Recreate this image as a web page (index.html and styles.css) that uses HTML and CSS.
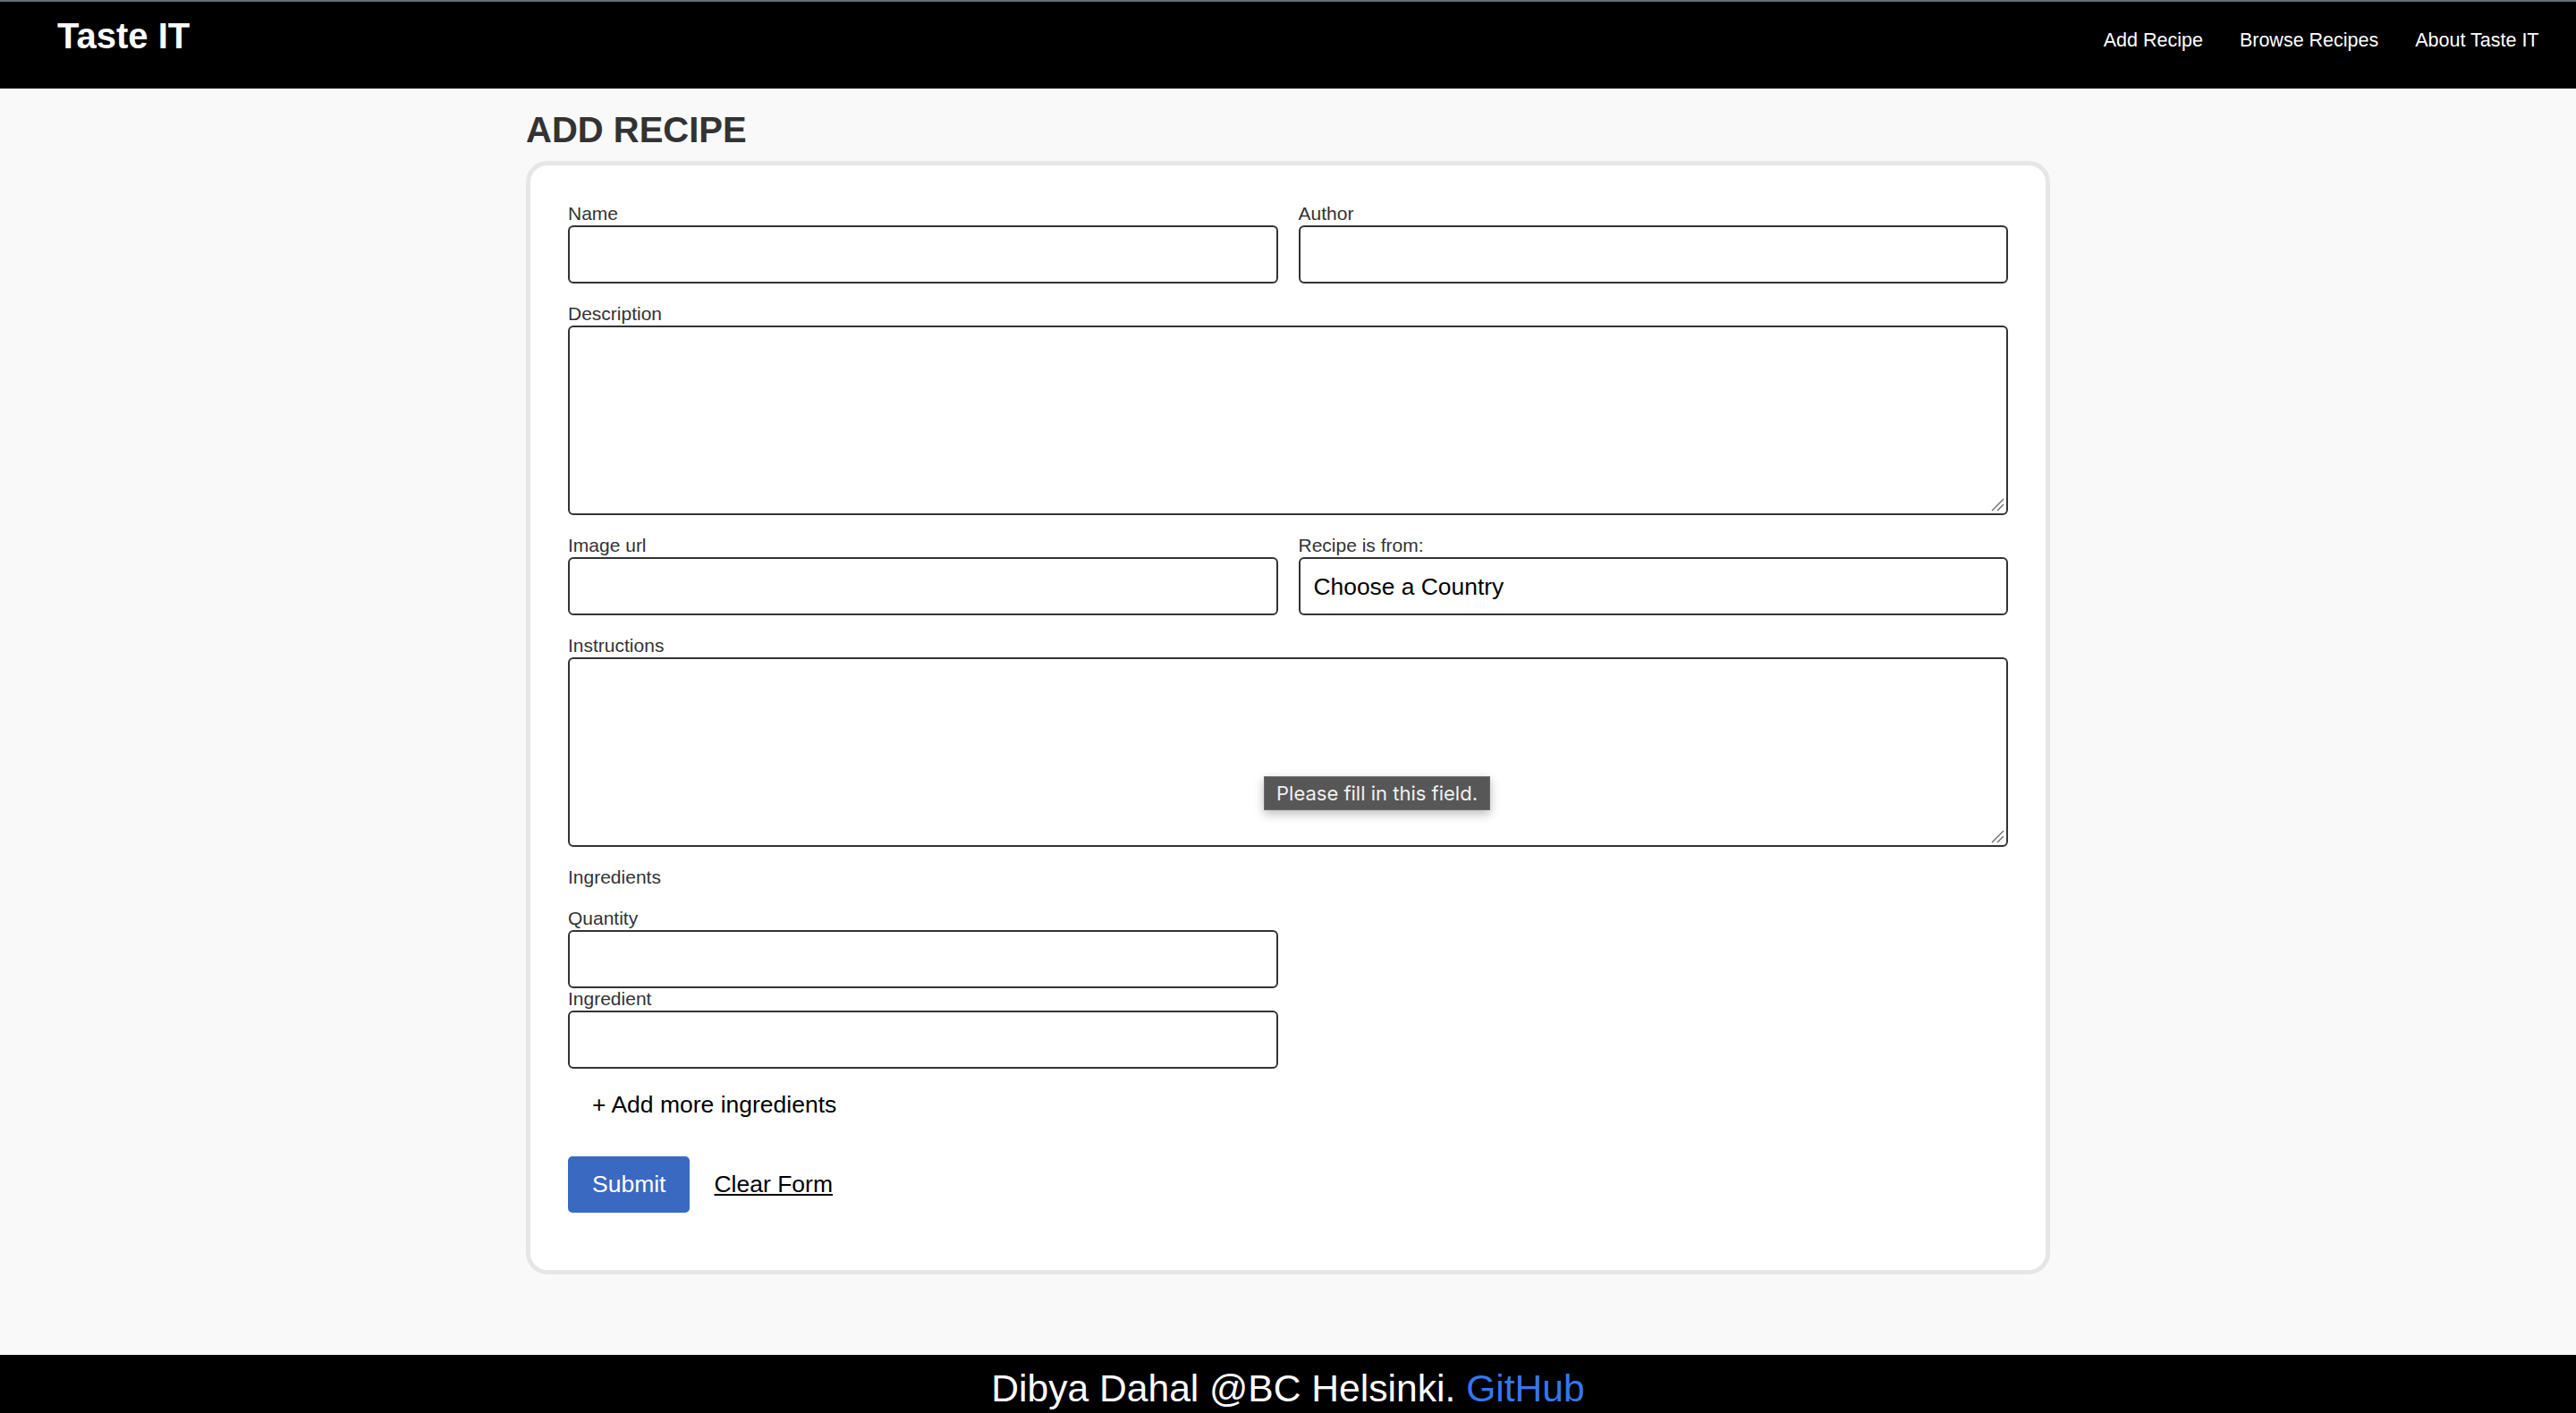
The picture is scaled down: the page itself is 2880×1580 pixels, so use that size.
FILE: index.html
```html
<!DOCTYPE html>
<html lang="en">
<head>
<meta charset="utf-8">
<title>Taste IT - Add Recipe</title>
<link rel="stylesheet" href="styles.css">
</head>
<body>
<header class="topbar">
  <a class="brand" href="#">Taste IT</a>
  <nav class="nav">
    <a href="#">Add Recipe</a>
    <a href="#">Browse Recipes</a>
    <a href="#">About Taste IT</a>
  </nav>
</header>
<main class="page">
  <div class="container">
    <h1 class="title">ADD RECIPE</h1>
    <form class="card">
      <div class="row">
        <div class="field">
          <label class="label" for="name">Name</label>
          <input class="control" id="name" type="text">
        </div>
        <div class="field">
          <label class="label" for="author">Author</label>
          <input class="control" id="author" type="text">
        </div>
      </div>
      <div class="field">
        <label class="label" for="desc">Description</label>
        <div class="area-wrap">
          <textarea class="control area" id="desc"></textarea>
          <svg class="grip" width="15" height="15" viewBox="0 0 15 15" aria-hidden="true"><path d="M1 14 L14 1 M7 14 L14 7" stroke="#6a6a6a" stroke-width="1.4" fill="none"/></svg>
        </div>
      </div>
      <div class="row">
        <div class="field">
          <label class="label" for="img">Image url</label>
          <input class="control" id="img" type="text">
        </div>
        <div class="field">
          <label class="label" for="country">Recipe is from:</label>
          <select class="control select" id="country">
            <option>Choose a Country</option>
          </select>
        </div>
      </div>
      <div class="field">
        <label class="label" for="instr">Instructions</label>
        <div class="area-wrap">
          <textarea class="control area" id="instr"></textarea>
          <svg class="grip" width="15" height="15" viewBox="0 0 15 15" aria-hidden="true"><path d="M1 14 L14 1 M7 14 L14 7" stroke="#6a6a6a" stroke-width="1.4" fill="none"/></svg>
          <div class="tooltip">Please fill in this field.</div>
        </div>
      </div>
      <p class="label section-label">Ingredients</p>
      <div class="ing-block">
        <div class="ing-item">
          <label class="label" for="qty">Quantity</label>
          <input class="control" id="qty" type="text">
          <label class="label" for="ing">Ingredient</label>
          <input class="control" id="ing" type="text">
        </div>
        <button type="button" class="btn add-more">+ Add more ingredients</button>
      </div>
      <div class="actions">
        <button type="submit" class="btn submit">Submit</button>
        <button type="reset" class="btn clear">Clear Form</button>
      </div>
    </form>
  </div>
</main>
<footer class="footer">
  Dibya Dahal @BC Helsinki. <a href="#">GitHub</a>
</footer>
</body>
</html>
```

FILE: styles.css
```css
* {
  box-sizing: border-box;
}

html, body {
  margin: 0;
  padding: 0;
}

body {
  min-height: 100vh;
  display: flex;
  flex-direction: column;
  background: #f9f9f9;
  font-family: "Liberation Sans", Arial, Helvetica, sans-serif;
  color: #333;
}

/* Header */
.topbar {
  display: flex;
  justify-content: space-between;
  align-items: flex-start;
  height: 99px;
  background: #000;
  border-top: 2px solid #66707a;
  padding: 0 21px 0 64px;
  flex: none;
}

.brand {
  margin-top: 15px;
  font-size: 40px;
  line-height: 46px;
  font-weight: bold;
  color: #fff;
  text-decoration: none;
}

.nav {
  display: flex;
  margin-top: 31px;
}

.nav a {
  padding: 0 20.5px;
  font-size: 21.5px;
  line-height: 24px;
  color: #fff;
  text-decoration: none;
}

/* Main */
.page {
  flex: 1;
}

.container {
  width: 1704px;
  margin: 0 auto;
}

.title {
  margin: 23px 0 12px;
  font-size: 40px;
  line-height: 46px;
  font-weight: bold;
  color: #333;
}

.card {
  display: flex;
  flex-direction: column;
  gap: 22px;
  background: #fff;
  border: 5px solid #e6e6e6;
  border-radius: 24px;
  padding: 42px;
}

.row {
  display: grid;
  grid-template-columns: 1fr 1fr;
  column-gap: 23px;
}

.field {
  display: flex;
  flex-direction: column;
}

.label {
  display: block;
  margin: 0 0 1px;
  font-size: 21px;
  line-height: 24px;
  color: #333;
}

.section-label {
  margin: 0;
}

.control {
  display: block;
  width: 100%;
  height: 65px;
  margin: 0;
  padding: 0 15px;
  border: 2px solid #333;
  border-radius: 6px;
  background: #fff;
  font-family: "Liberation Sans", Arial, Helvetica, sans-serif;
  font-size: 26.4px;
  color: #000;
  outline: none;
}

.area {
  height: 212px;
  padding: 8px 15px;
  resize: none;
}

.select {
  -webkit-appearance: none;
  appearance: none;
  padding: 0 15px;
}

.area-wrap {
  position: relative;
}

.grip {
  position: absolute;
  right: 4px;
  bottom: 4px;
  pointer-events: none;
}

.tooltip {
  position: absolute;
  left: 778px;
  top: 133px;
  width: 253px;
  height: 38px;
  padding: 0 13px;
  background: #575757;
  border: 1px solid #6c6c6c;
  color: #f0f0f0;
  font-family: Inter, "Noto Sans", sans-serif;
  font-size: 22px;
  line-height: 36px;
  white-space: nowrap;
  box-shadow: 0 4px 12px rgba(0, 0, 0, 0.28);
}

.ing-block {
  display: flex;
  flex-direction: column;
  align-items: flex-start;
}

.ing-item {
  width: 793.5px;
}

.btn {
  margin: 0;
  padding: 16px 27px;
  border: none;
  background: transparent;
  font-family: "Liberation Sans", Arial, Helvetica, sans-serif;
  font-size: 26.5px;
  line-height: 31px;
  color: #000;
  cursor: pointer;
}

.add-more {
  margin-top: 9px;
}

.actions {
  display: flex;
  align-items: center;
  margin: 4px 0 22px;
}

.submit {
  background: #3a69c2;
  color: #fff;
  border-radius: 5px;
}

.clear {
  text-decoration: underline;
}

/* Footer */
.footer {
  flex: none;
  height: 65px;
  padding-top: 13px;
  background: #000;
  color: #fff;
  text-align: center;
  font-size: 42.6px;
  line-height: 48px;
  overflow: hidden;
}

.footer a {
  color: #3477f2;
  text-decoration: none;
}
```
